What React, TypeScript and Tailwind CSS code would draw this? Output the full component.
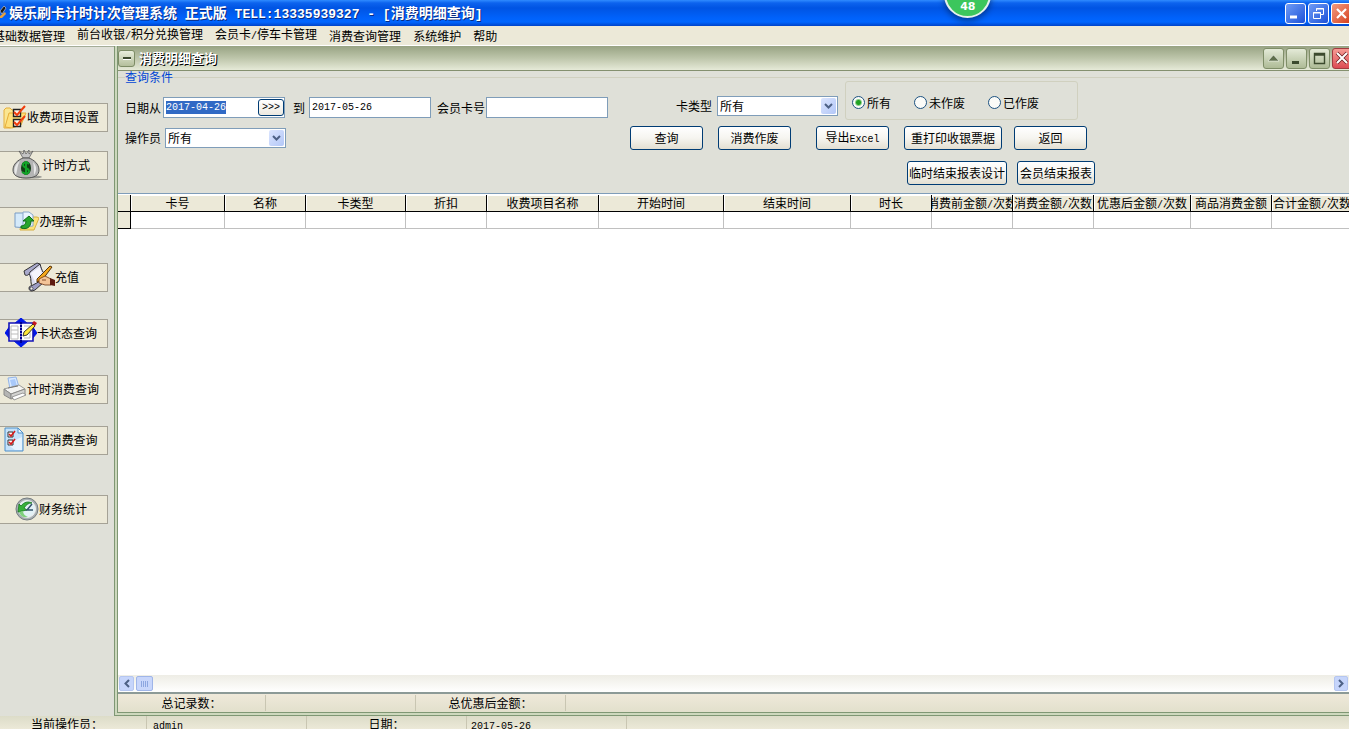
import clsx from "clsx";
import React, { useEffect, useRef, useState } from "react";

const menus = [
  "基础数据管理",
  "前台收银/积分兑换管理",
  "会员卡/停车卡管理",
  "消费查询管理",
  "系统维护",
  "帮助",
];

const columns = [
  { name: "卡号", width: 94 },
  { name: "名称", width: 81 },
  { name: "卡类型", width: 100 },
  { name: "折扣", width: 81 },
  { name: "收费项目名称", width: 112 },
  { name: "开始时间", width: 125 },
  { name: "结束时间", width: 127 },
  { name: "时长", width: 81 },
  { name: "消费前金额/次数", width: 81 },
  { name: "消费金额/次数", width: 81 },
  { name: "优惠后金额/次数", width: 97 },
  { name: "商品消费金额", width: 81 },
  { name: "合计金额/次数", width: 81 },
];

// Latin runs are set in the mono face, half as wide as a Chinese character
const Label = ({ text, latin = "text-[10px]" }: { text: string; latin?: string }) => (
  <>
    {text.split(/([\x20-\x7e]+)/).map((part, i) =>
      i % 2 ? (
        <span key={i} className={clsx("font-['Liberation_Mono',monospace] whitespace-pre", latin)}>
          {part}
        </span>
      ) : (
        part
      ),
    )}
  </>
);

const FolderCheckIcon = () => (
  <svg width="24" height="25" viewBox="0 0 24 25">
    <path d="M1 6l2-2h4l2 2h7v15l-9 3H1z" fill="#fbe690" stroke="#e5ae3a" />
    <path d="M2 23l4-14h17l-5 12-9 3z" fill="#ffe07a" stroke="#e5ae3a" />
    <path d="M10.500 5.500h7v7h-7zM10.500 15.500h7v7h-7z" fill="#fff3e8" stroke="#222" strokeWidth="1.400" />
    <path d="M11 8l3 3 8-9M11 18l3 3 8-9" fill="none" stroke="#f03c0c" strokeWidth="2" />
  </svg>
);

const MoneyBagIcon = () => (
  <svg width="30" height="29" viewBox="0 0 30 29">
    <ellipse cx="18" cy="27" rx="12" ry="1.600" fill="#9a9a94" />
    <path d="M7 1l4 3 1-4 2 4 3-4 0 4 4-3-4 7h-6z" fill="#c4c4c4" stroke="#555" strokeWidth=".7" />
    <path d="M11 8h6c5 2 10 6 10 12 0 5-4 8-13 8S1 25 1 20c0-6 5-10 10-12z" fill="#b4b4b4" stroke="#555" />
    <path d="M8 11c-6 4-7 10-4 14 2-7 1-9 4-14zM21 12c4 4 4 9 1 13 0-6 0-8-1-13z" fill="#e8e8e8" />
    <ellipse cx="14" cy="18" rx="5" ry="7" fill="#123d16" />
    <path d="M17 14c-2-2-6-2-6 1s6 3 6 6-4 3-7 1M14 11v14" fill="none" stroke="#12a328" strokeWidth="2" />
  </svg>
);

const NewCardIcon = () => (
  <svg width="25" height="20" viewBox="0 0 25 20">
    <path d="M8 6h15l2 1-5 12H6z" fill="#fbe27a" stroke="#d6b040" />
    <path d="M1 2h9l3 3v12l-12-1z" fill="#d5eafa" stroke="#7a9cc4" />
    <path d="M9 1h6l4 3v11l-10 1z" fill="#eaf5ff" stroke="#8aa8cc" />
    <path d="M7 17c6 2 10-1 10-7h3l-5-5-6 5h3c0 3-2 5-5 5z" fill="#27a52b" stroke="#0f6d18" />
  </svg>
);

const ScrollPenIcon = () => (
  <svg width="32" height="30" viewBox="0 0 32 30">
    <path d="M3 8L14 1h3l5 13-2 7-9 4-4-9z" fill="#dcdcf0" />
    <path d="M8 11L17 5l3 11-7 6z" fill="#f4f4fc" />
    <path d="M1 9L14 1l3 1-10 8c-1 3-3 4-5 3z" fill="#a9a9cc" stroke="#222" strokeWidth=".9" />
    <path d="M6 12c3 4 1 8 3 12M17 2c1 4 2 6 3 8" fill="none" stroke="#222" />
    <path d="M6 26c0-2 2-2 4-3l9-5 2 2-9 8-3 1c-2 0-3-1-3-3z" fill="#9c9cc4" stroke="#222" strokeWidth=".9" />
    <circle cx="8.500" cy="26.500" r="1.500" fill="#eee" stroke="#222" strokeWidth=".6" />
    <path d="M14 17L27 4l2 1-9 12-6 3z" fill="#f5a81c" stroke="#442200" strokeWidth=".9" />
    <path d="M16 17l6-3 6 3v6h-6l-6-2z" fill="#f3c498" stroke="#6b3413" strokeWidth=".8" />
    <path d="M19 18h4" stroke="#6b3413" strokeWidth=".8" />
    <path d="M27 16l5 2v6l-5-1z" fill="#5e1a10" />
  </svg>
);

const BookPencilIcon = () => (
  <svg width="32" height="29" viewBox="0 0 32 29">
    <path d="M16 0l7 6H9zM16 29l-7-6h14zM0 15l5-7v13zM32 15l-5-7v13z" fill="#0018e8" stroke="#0018e8" />
    <path d="M4 5h11l1 1 1-1h11v18H17l-1 1-1-1H4z" fill="#fff" stroke="#1515b8" strokeWidth="1.600" />
    <path d="M16 4v21" stroke="#000090" strokeWidth="2" />
    <path d="M16 6v17" stroke="#fff" strokeDasharray="1 2" />
    <path d="M6 8h7v13H6zM6 12h7M6 16h7M19 8h6M19 20h6v-6" fill="none" stroke="#bbb" />
    <path d="M18 18l1-4 9-8 2 2-8 9z" fill="#ffe838" stroke="#222" strokeWidth=".9" />
    <path d="M27 5l2-2 3 2-2 3z" fill="#c4161c" />
  </svg>
);

const PrinterIcon = () => (
  <svg width="24" height="25" viewBox="0 0 24 25">
    <path d="M5 2l8-1 3 10-9 2z" fill="#d8e9ff" stroke="#93b4e8" />
    <path d="M7 4l5-1 2 7-5 1z" fill="#a9c9fa" />
    <path d="M1 13l15-4 6 4-14 5z" fill="#f4f4f2" stroke="#9b9b98" />
    <path d="M1 13l7 5v5l-7-4z" fill="#b5b5b4" stroke="#8a8a88" />
    <path d="M8 18l14-5v6L8 23z" fill="#d3d3d1" stroke="#8a8a88" />
    <path d="M9 21l11-4 3 2-12 5z" fill="#fff" stroke="#777" strokeWidth=".7" />
    <path d="M5 12l10-2" stroke="#777" />
  </svg>
);

const PageCheckIcon = () => (
  <svg width="21" height="25" viewBox="0 0 21 25">
    <path d="M1 1h13l5 5v18H1z" fill="#c5e2fa" stroke="#4d8fca" />
    <path d="M14 1v5h5z" fill="#eef8ff" stroke="#4d8fca" />
    <path d="M3 17l8 6h7V10z" fill="#e6f4ff" />
    <path d="M4 5h5v5H4zM4 13h5v5H4z" fill="#fff" stroke="#333" />
    <path d="M5 7l2 2 4-5M5 15l2 2 4-5" fill="none" stroke="#d81a1a" strokeWidth="1.600" />
  </svg>
);

const ClockIcon = () => (
  <svg width="24" height="24" viewBox="0 0 24 24">
    <circle cx="12" cy="12" r="11" fill="#a8b0b4" stroke="#747c80" />
    <circle cx="12" cy="12" r="8.500" fill="#e2f1f6" stroke="#eee" />
    <path d="M3 15l1-8 2 2c3-4 7-5 11-3-4 0-6 2-8 5l3 2z" fill="#35b03a" stroke="#14751d" strokeWidth=".8" />
    <path d="M4 15c2 5 6 6 9 5-3-1-5-3-5-6z" fill="#7fd07e" />
    <path d="M17 7l-5 6h6" fill="none" stroke="#33546b" strokeWidth="1.500" />
  </svg>
);

const sideButtons = [
  { name: "收费项目设置", icon: <FolderCheckIcon />, space: "mb-[19px]" },
  { name: "计时方式", icon: <MoneyBagIcon />, space: "mb-[27px]" },
  { name: "办理新卡", icon: <NewCardIcon />, space: "mb-[27px]" },
  { name: "充值", icon: <ScrollPenIcon />, space: "mb-[27px]" },
  { name: "卡状态查询", icon: <BookPencilIcon />, space: "mb-[27px]" },
  { name: "计时消费查询", icon: <PrinterIcon />, space: "mb-[22px]" },
  { name: "商品消费查询", icon: <PageCheckIcon />, space: "mb-10" },
  { name: "财务统计", icon: <ClockIcon />, space: "" },
];

const Button = ({ text, className }: { text: string; className: string }) => (
  <button
    className={clsx(
      "h-6 shrink-0 overflow-hidden rounded-[3px] border border-[#003c74] bg-linear-to-b from-white via-[#f6f5f0] to-[#e3dfd2] whitespace-nowrap",
      className,
    )}
  >
    <span className="flex justify-center">
      <span>
        <Label text={text} />
      </span>
    </span>
  </button>
);

const Select = ({ id }: { id: string }) => (
  <div className="relative w-[121px]">
    <select id={id} className="h-5 w-full appearance-none border border-[#7f9db9] bg-white pl-0.5 leading-4 outline-none">
      <option>所有</option>
    </select>
    <span className="pointer-events-none absolute top-0.5 right-0.5 flex h-4 w-[15px] items-center justify-center rounded-xs bg-linear-to-br from-[#dbe5fe] to-[#b3c7f7]">
      <svg width="9" height="6" viewBox="0 0 9 6">
        <path d="M1 1l3.500 3.500L8 1" fill="none" stroke="#4d6185" strokeWidth="2" />
      </svg>
    </span>
  </div>
);

const TitleBar = () => (
  <header className="flex h-[26px] shrink-0 items-center bg-[linear-gradient(#2f8bff_0,#0c63ee_3px,#0054e3_8px,#0062fb_18px,#0066ff_22px,#0043c8_26px)] text-white">
    <svg width="9" height="18" viewBox="0 0 9 18" className="shrink-0">
      <path d="M0 7l4-5 2 2-4 6z" fill="#1a1a1a" stroke="#ddd" strokeWidth=".6" />
      <path d="M0 12l5-4 1 2-4 4H0z" fill="#e8a13c" />
    </svg>
    <h1 className="flex-1 text-sm font-bold whitespace-nowrap text-shadow-[1px_1px_0_#0a2a80]">
      <Label text="娱乐刷卡计时计次管理系统 正式版 TELL:13335939327 - [消费明细查询]" latin="text-[13px]" />
    </h1>
    <div className="-mr-[3px] flex shrink-0 gap-0.5">
      <button aria-label="最小化" className="size-[21px] rounded-[3px] border border-white bg-linear-to-br from-[#6f9bf5] to-[#1c4fd8]">
        <svg viewBox="0 0 19 19">
          <path d="M4 13h7" stroke="#fff" strokeWidth="3" />
        </svg>
      </button>
      <button aria-label="还原" className="size-[21px] rounded-[3px] border border-white bg-linear-to-br from-[#6f9bf5] to-[#1c4fd8]">
        <svg viewBox="0 0 19 19" fill="none" stroke="#fff">
          <path d="M7.500 7V4.500h7v6H12M7 5h8M4.500 8.500h7v6h-7zM4 9h8" />
        </svg>
      </button>
      <button aria-label="关闭" className="size-[21px] rounded-[3px] border border-white bg-linear-to-br from-[#f19a80] to-[#d4380e]">
        <svg viewBox="0 0 19 19">
          <path d="M5 5l9 9M14 5l-9 9" stroke="#fff" strokeWidth="2.200" />
        </svg>
      </button>
    </div>
  </header>
);

const childControls = [
  { name: "卷起", draw: <path d="M4 12l5.500-6 5.500 6z" fill="#5f6f4c" stroke="#fff" strokeWidth=".5" /> },
  { name: "最小化窗口", draw: <path d="M5 13.500h7" stroke="#3c4a2e" strokeWidth="3" /> },
  { name: "最大化窗口", draw: <path d="M4.500 4.500h10v10h-10zM4 6h11" fill="none" stroke="#3c4a2e" strokeWidth="1.400" /> },
];

const ChildTitle = () => (
  <div className="flex h-[25px] shrink-0 items-center border-b border-[#84906f] bg-linear-to-b from-[#98a383] via-[#bdc5aa] to-[#e6ead8]">
    <button aria-label="窗口菜单" className="flex size-[17px] items-center justify-center rounded-[3px] border border-[#7d8c66] bg-linear-to-b from-[#e8eddc] to-[#b4bf9c]">
      <span className="h-[3px] w-2 border-t-2 border-b border-t-[#3c4a2e] border-b-white" />
    </button>
    <h2 className="ml-1 flex-1 text-[13px] font-bold text-white text-shadow-[1px_1px_0_#000]">消费明细查询</h2>
    <div className="-mr-1 flex shrink-0 gap-0.5">
      {childControls.map((c) => (
        <button key={c.name} aria-label={c.name} className="size-[21px] rounded-[3px] border border-[#7f8e68] bg-linear-to-b from-[#e4ead8] to-[#aebb96]">
          <svg viewBox="0 0 19 19">{c.draw}</svg>
        </button>
      ))}
      <button aria-label="关闭窗口" className="size-[21px] rounded-[3px] border border-[#a23b40] bg-linear-to-b from-[#f59a94] to-[#dc4a55]">
        <svg viewBox="0 0 19 19">
          <path d="M4 4l10 10M14 4L4 14" stroke="#6b1f22" strokeWidth="3.500" />
          <path d="M4 4l10 10M14 4L4 14" stroke="#fff" strokeWidth="2" />
        </svg>
      </button>
    </div>
  </div>
);

const Filters = () => {
  const fromRef = useRef<HTMLInputElement>(null);
  const [state, setState] = useState("所有");

  useEffect(() => {
    fromRef.current?.focus();
    fromRef.current?.select();
  }, []);

  const inputClass =
    "h-[21px] w-[122px] border border-[#7f9db9] bg-white px-0.5 font-['Liberation_Mono',monospace] text-[10px] outline-none";

  return (
    <fieldset className="shrink-0 border-t border-[#d0d0bf] px-[7px] pb-2">
      <legend className="leading-3 text-[#0046d5]">查询条件</legend>
      <div className="-mt-0.5 flex items-start gap-[22px] whitespace-nowrap">
        <div className="flex shrink-0 flex-col gap-2.5 pt-4">
          <div className="flex items-center">
            <label htmlFor="from" className="mr-0.5">日期从</label>
            <div className="flex h-[21px] w-[122px] items-center border border-[#7f9db9] bg-white">
              <input
                id="from"
                ref={fromRef}
                defaultValue="2017-04-26"
                className="w-full min-w-0 flex-1 px-0.5 font-['Liberation_Mono',monospace] text-[10px] outline-none selection:bg-[#316ac5] selection:text-white"
              />
              <button className="flex h-[17px] w-[26px] items-center justify-center rounded-[3px] border border-[#003c74] bg-linear-to-b from-white to-[#ece9e0]">
                <Label text=">>>" />
              </button>
            </div>
            <label htmlFor="to" className="mr-1 ml-2">到</label>
            <input id="to" defaultValue="2017-05-26" className={inputClass} />
            <label htmlFor="card" className="mr-px ml-1.5">会员卡号</label>
            <input id="card" className={inputClass} />
          </div>
          <div className="flex items-center gap-1">
            <label htmlFor="operator">操作员</label>
            <Select id="operator" />
          </div>
        </div>

        <div>
          <div className="flex h-[39px] pl-[46px]">
            <div className="flex items-center gap-[5px] pt-2.5">
              <label htmlFor="type">卡类型</label>
              <Select id="type" />
            </div>
            <div className="ml-[7px] flex w-[233px] items-center gap-[23px] rounded-[3px] border border-[#d0d0bf] pt-1 pl-1.5">
              {["所有", "未作废", "已作废"].map((name) => (
                <label key={name} className="flex items-center gap-0.5">
                  <input
                    type="radio"
                    name="state"
                    checked={state === name}
                    onChange={() => setState(name)}
                    className="size-[13px] appearance-none rounded-full border border-[#1c5180] bg-[#fbfbf8] checked:bg-[radial-gradient(circle,#21a121_0_2px,#fbfbf8_4px)]"
                  />
                  {name}
                </label>
              ))}
            </div>
          </div>
          <div className="mt-1.5 flex gap-[15px]">
            <Button text="查询" className="w-[73px]" />
            <Button text="消费作废" className="w-[73px]" />
            <Button text="导出Excel" className="ml-2.5 w-[73px]" />
            <div className="flex gap-3">
              <Button text="重打印收银票据" className="w-[98px]" />
              <Button text="返回" className="w-[73px]" />
            </div>
          </div>
          <div className="mt-[11px] flex gap-2.5 pl-[277px]">
            <Button text="临时结束报表设计" className="w-[100px]" />
            <Button text="会员结束报表" className="w-[78px]" />
          </div>
        </div>
      </div>
    </fieldset>
  );
};

const Grid = () => (
  <div className="flex min-h-0 flex-1 flex-col border-t border-[#7f9db9] bg-white">
    <div className="min-h-0 flex-1 overflow-hidden pt-px">
      <table className="w-[1235px] table-fixed border-separate border-spacing-0">
        <colgroup>
          <col style={{ width: 13 }} />
          {columns.map((c) => (
            <col key={c.name} style={{ width: c.width }} />
          ))}
        </colgroup>
        <thead>
          <tr className="bg-[#ece9d8]">
            <th className="border-r border-b border-black" />
            {columns.map((c) => (
              <th key={c.name} className="h-[17px] border-r border-b border-black p-0 font-normal shadow-[inset_1px_1px_0_#fff]">
                <div className="flex h-4 justify-center overflow-hidden leading-4 whitespace-nowrap">
                  <span>
                    <Label text={c.name} />
                  </span>
                </div>
              </th>
            ))}
          </tr>
        </thead>
        <tbody>
          <tr>
            <td className="h-[17px] border-r border-b border-black bg-[#ece9d8] p-0" />
            {columns.map((c) => (
              <td key={c.name} className="border-r border-b border-[#c0c0c0] p-0" />
            ))}
          </tr>
        </tbody>
      </table>
    </div>
    <div className="flex h-[17px] shrink-0 items-center gap-0.5 bg-linear-to-b from-[#eeede5] to-white px-px">
      <button aria-label="向左滚动" className="flex h-[15px] w-[15px] items-center justify-center rounded-xs border border-[#b5c6f0] bg-[#c6d5fb]">
        <svg width="6" height="9" viewBox="0 0 6 9">
          <path d="M5 1L1.500 4.500 5 8" fill="none" stroke="#4d6185" strokeWidth="2" />
        </svg>
      </button>
      <div className="flex h-[15px] w-[17px] items-center justify-center gap-px rounded-xs border border-[#9fb5e8] bg-[#c8d6fb]">
        {[0, 1, 2, 3].map((n) => (
          <span key={n} className="h-1.5 w-px bg-[#8ca6e0]" />
        ))}
      </div>
      <button aria-label="向右滚动" className="ml-auto flex h-[15px] w-[14px] items-center justify-center rounded-xs border border-[#b5c6f0] bg-[#c6d5fb]">
        <svg width="6" height="9" viewBox="0 0 6 9">
          <path d="M1 1l3.500 3.500L1 8" fill="none" stroke="#4d6185" strokeWidth="2" />
        </svg>
      </button>
    </div>
  </div>
);

const App = () => (
  <div className="flex h-screen flex-col overflow-hidden bg-[#dfe0d8] font-['Noto_Sans_CJK_SC',sans-serif] text-xs text-black">
    <TitleBar />
    <div className="absolute -top-[29px] left-[70%] flex size-[47px] items-end justify-center rounded-full border-2 border-[#e4f0ec] bg-[#3cc65c] pb-px text-[11px] font-bold text-white shadow-[0_3px_6px_#0006]">
      <span className="font-['DejaVu_Sans',sans-serif]">48</span>
    </div>

    <nav className="-ml-[7px] flex h-5 shrink-0 items-center gap-3 border-b border-white bg-[#ece9d8] whitespace-nowrap">
      {menus.map((m) => (
        <button key={m} className="leading-4">
          <Label text={m} />
        </button>
      ))}
    </nav>

    <div className="flex min-h-0 flex-1">
      <aside className="flex w-[114px] shrink-0 flex-col overflow-hidden border-t border-[#a5ad98] pt-14">
        {sideButtons.map((b) => (
          <button
            key={b.name}
            className={clsx(
              "-ml-1.5 flex h-[29px] w-[114px] shrink-0 items-center justify-center border border-[#a5a296] bg-[#ece9d8] pb-0.5 whitespace-nowrap",
              b.space,
            )}
          >
            {b.icon}
            {b.name}
          </button>
        ))}
      </aside>

      <main className="flex min-w-0 flex-1 flex-col overflow-hidden border-b-4 border-l-4 border-double border-[#7f9774] bg-[#cdd8bd]">
        <ChildTitle />
        <div className="bg-[#dfe0d8]">
          <Filters />
        </div>
        <Grid />
        <div className="flex h-5 shrink-0 items-center border-t-2 border-[#8c9a97] bg-linear-to-b from-[#efe9da] to-[#e2e0cc] text-center">
          <span className="w-[148px] border-r border-[#c9c6b2]">总记录数：</span>
          <span className="h-4 w-[150px] border-r border-[#c9c6b2]" />
          <span className="w-[150px] border-r border-[#c9c6b2]">总优惠后金额：</span>
        </div>
      </main>
    </div>

    <footer className="flex h-[13px] shrink-0 overflow-hidden bg-linear-to-b from-[#dcdcc8] to-[#ece9d8] leading-4">
      <span className="w-[147px] border-r border-[#c9c6b2] pr-3 text-center">当前操作员：</span>
      <span className="w-40 border-r border-[#c9c6b2] pl-1.5">
        <Label text="admin" />
      </span>
      <span className="w-40 border-r border-[#c9c6b2] text-center">日期：</span>
      <span className="w-40 border-r border-[#c9c6b2] pl-1">
        <Label text="2017-05-26" />
      </span>
    </footer>
  </div>
);

export default App;
